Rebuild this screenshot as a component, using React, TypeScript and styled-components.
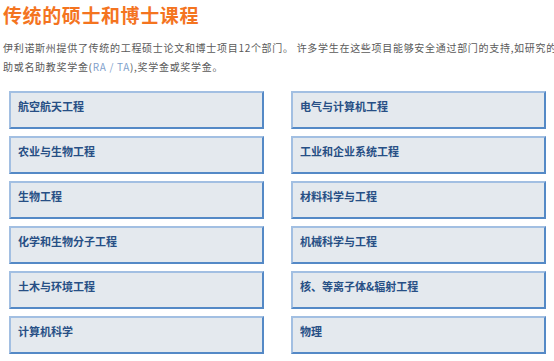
import React from "react";
import styled, { createGlobalStyle } from "styled-components";

const Global = createGlobalStyle`
  html, body { margin: 0; padding: 0; background: #fff; overflow: hidden; }
  body { font-family: "Noto Sans CJK SC", "Noto Sans", sans-serif; }
`;

const Page = styled.div`
  width: 554px;
  height: 361px;
  overflow: hidden;
  padding: 0 0 0 3px;
  box-sizing: border-box;
`;

const Title = styled.h2`
  margin: 0;
  height: 30px;
  line-height: 30px;
  font-size: 19px;
  font-weight: 700;
  letter-spacing: 0.6px;
  color: #f4741f;
  font-family: "Noto Sans CJK SC", sans-serif;
`;

const Intro = styled.p`
  margin: 8px 0 0 0;
  font-size: 10px;
  line-height: 19px;
  letter-spacing: 0.7px;
  color: #5a5a5a;
  white-space: nowrap;
  font-family: "Noto Sans CJK SC", sans-serif;
`;

const Link = styled.span`
  color: #7f9fcc;
`;

const Grid = styled.div`
  margin: 15px 0 0 6px;
  display: grid;
  grid-template-columns: 255px 255px;
  column-gap: 27px;
  row-gap: 7px;
`;

const Card = styled.div`
  height: 38px;
  box-sizing: border-box;
  background: #e4e9ee;
  border-style: solid;
  border-width: 2px;
  border-color: #a2bfe2 #5489c6 #5489c6 #a2bfe2;
  padding: 6px 7px;
  font-size: 11px;
  line-height: 14px;
  font-weight: 700;
  color: #274f85;
  font-family: "Noto Sans CJK SC", sans-serif;
`;

const programs = [
  "航空航天工程",
  "电气与计算机工程",
  "农业与生物工程",
  "工业和企业系统工程",
  "生物工程",
  "材料科学与工程",
  "化学和生物分子工程",
  "机械科学与工程",
  "土木与环境工程",
  "核、等离子体&辐射工程",
  "计算机科学",
  "物理",
];

export default function App() {
  return (
    <>
      <Global />
      <Page>
        <Title>传统的硕士和博士课程</Title>
        <Intro>
          伊利诺斯州提供了传统的工程硕士论文和博士项目12个部门。 许多学生在这些项目能够安全通过部门的支持,如研究的资
          <br />
          助或名助教奖学金(<Link>RA / TA</Link>),奖学金或奖学金。
        </Intro>
        <Grid>
          {programs.map((p) => (
            <Card key={p}>{p}</Card>
          ))}
        </Grid>
      </Page>
    </>
  );
}
